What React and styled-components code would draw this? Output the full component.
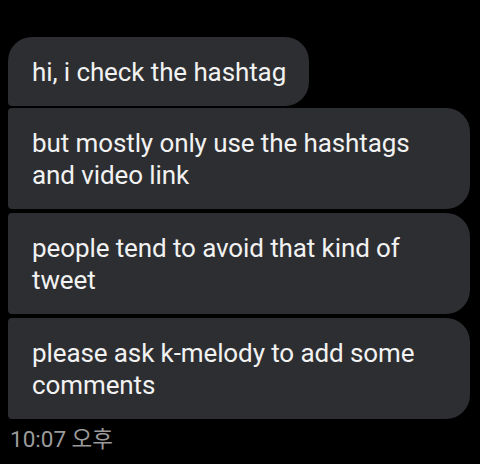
import React from 'react';
import styled, { createGlobalStyle } from 'styled-components';

const GlobalStyle = createGlobalStyle`
  html, body {
    margin: 0;
    padding: 0;
    background: #000;
  }
  body {
    font-family: Roboto, "Noto Sans CJK KR", sans-serif;
    -webkit-font-smoothing: antialiased;
  }
`;

const Thread = styled.div`
  width: 480px;
  height: 464px;
  box-sizing: border-box;
  padding: 37px 10px 0 8px;
  display: flex;
  flex-direction: column;
  align-items: flex-start;
  gap: 4px;
  overflow: hidden;
`;

const Bubble = styled.div`
  box-sizing: border-box;
  max-width: 462px;
  padding: 19px 23px 18px 24px;
  background: #2d2e31;
  color: #f2f2f2;
  font-size: 26px;
  line-height: 32px;
  letter-spacing: -0.1px;
  border-radius: ${({ $first }) => ($first ? '24px 24px 24px 4px' : '4px 24px 24px 4px')};
  margin-top: ${({ $tight }) => ($tight ? '-2px' : '0')};
`;

const Time = styled.div`
  margin-top: 2px;
  padding-left: 2px;
  font-size: 22.5px;
  line-height: 28px;
  color: #9b9b9b;
`;

const messages = [
  'hi, i check the hashtag',
  'but mostly only use the hashtags and video link',
  'people tend to avoid that kind of tweet',
  'please ask k-melody to add some comments',
];

const App = () => {
  return (
    <>
      <GlobalStyle />
      <Thread>
        {messages.map((text, i) => (
          <Bubble key={i} $first={i === 0} $tight={i === 1}>
            {text}
          </Bubble>
        ))}
        <Time>10:07 오후</Time>
      </Thread>
    </>
  );
};

export default App;
